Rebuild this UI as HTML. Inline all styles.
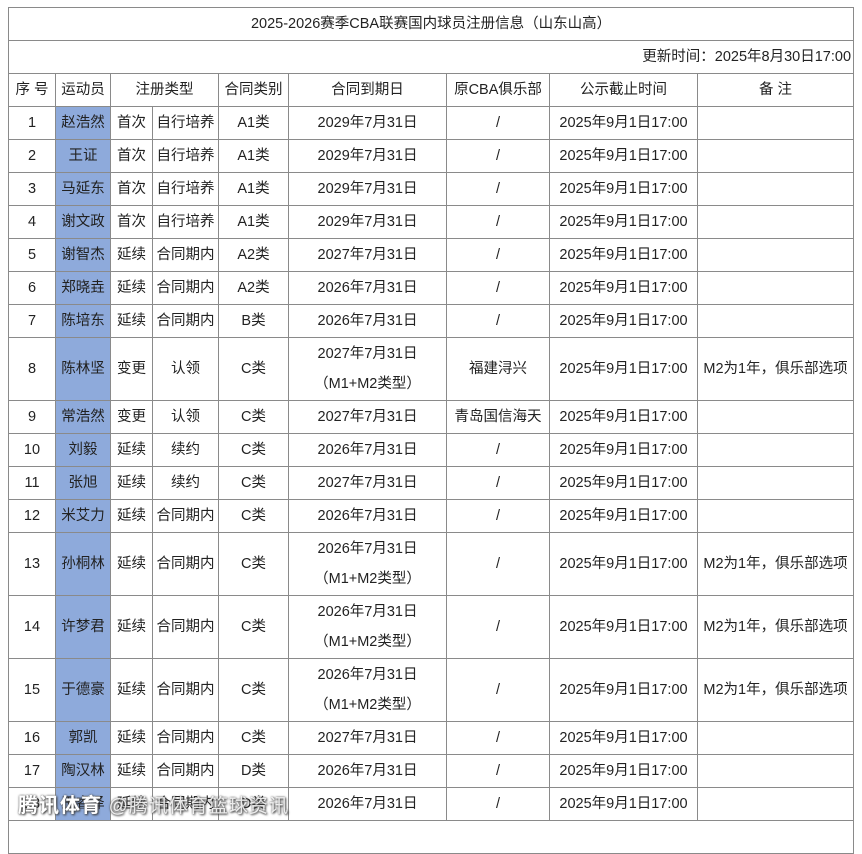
<!DOCTYPE html>
<html><head><meta charset="utf-8"><style>
body{margin:0;width:862px;height:828px;background:#fff;overflow:hidden;position:relative;font-family:"Liberation Sans","Noto Sans CJK SC",sans-serif;font-size:14.5px;color:#222}
table{position:absolute;left:8px;top:7px;border-collapse:collapse;table-layout:fixed;width:845px}
td{border:1px solid #8a8a8a;padding:0;text-align:center;vertical-align:middle;white-space:nowrap;overflow:hidden;line-height:30px}
tr{height:33px}
tr.t{height:63px}
td.b{background:#8eaadb}
.wm{position:absolute;left:18px;top:789px;font-size:20px;color:#fff;font-weight:bold;text-shadow:0 0 2px #555,1px 1px 2px #333;letter-spacing:1px;white-space:nowrap}
.wm span{font-weight:normal;font-size:19px;color:rgba(255,255,255,.85)}
</style></head><body>
<table>
<colgroup><col style="width:47px"><col style="width:55px"><col style="width:42px"><col style="width:66px"><col style="width:70px"><col style="width:158px"><col style="width:103px"><col style="width:148px"><col style="width:156px"></colgroup>
<tr><td colspan="9">2025-2026赛季CBA联赛国内球员注册信息（山东山高）</td></tr>
<tr><td colspan="9" style="text-align:right;padding-right:2px">更新时间：2025年8月30日17:00</td></tr>
<tr><td>序 号</td><td>运动员</td><td colspan="2">注册类型</td><td>合同类别</td><td>合同到期日</td><td>原CBA俱乐部</td><td>公示截止时间</td><td>备 注</td></tr>
<tr><td>1</td><td class="b">赵浩然</td><td>首次</td><td>自行培养</td><td>A1类</td><td>2029年7月31日</td><td>/</td><td>2025年9月1日17:00</td><td></td></tr>
<tr><td>2</td><td class="b">王证</td><td>首次</td><td>自行培养</td><td>A1类</td><td>2029年7月31日</td><td>/</td><td>2025年9月1日17:00</td><td></td></tr>
<tr><td>3</td><td class="b">马延东</td><td>首次</td><td>自行培养</td><td>A1类</td><td>2029年7月31日</td><td>/</td><td>2025年9月1日17:00</td><td></td></tr>
<tr><td>4</td><td class="b">谢文政</td><td>首次</td><td>自行培养</td><td>A1类</td><td>2029年7月31日</td><td>/</td><td>2025年9月1日17:00</td><td></td></tr>
<tr><td>5</td><td class="b">谢智杰</td><td>延续</td><td>合同期内</td><td>A2类</td><td>2027年7月31日</td><td>/</td><td>2025年9月1日17:00</td><td></td></tr>
<tr><td>6</td><td class="b">郑晓垚</td><td>延续</td><td>合同期内</td><td>A2类</td><td>2026年7月31日</td><td>/</td><td>2025年9月1日17:00</td><td></td></tr>
<tr><td>7</td><td class="b">陈培东</td><td>延续</td><td>合同期内</td><td>B类</td><td>2026年7月31日</td><td>/</td><td>2025年9月1日17:00</td><td></td></tr>
<tr class="t"><td>8</td><td class="b">陈林坚</td><td>变更</td><td>认领</td><td>C类</td><td>2027年7月31日<br>（M1+M2类型）</td><td>福建浔兴</td><td>2025年9月1日17:00</td><td>M2为1年，俱乐部选项</td></tr>
<tr><td>9</td><td class="b">常浩然</td><td>变更</td><td>认领</td><td>C类</td><td>2027年7月31日</td><td>青岛国信海天</td><td>2025年9月1日17:00</td><td></td></tr>
<tr><td>10</td><td class="b">刘毅</td><td>延续</td><td>续约</td><td>C类</td><td>2026年7月31日</td><td>/</td><td>2025年9月1日17:00</td><td></td></tr>
<tr><td>11</td><td class="b">张旭</td><td>延续</td><td>续约</td><td>C类</td><td>2027年7月31日</td><td>/</td><td>2025年9月1日17:00</td><td></td></tr>
<tr><td>12</td><td class="b">米艾力</td><td>延续</td><td>合同期内</td><td>C类</td><td>2026年7月31日</td><td>/</td><td>2025年9月1日17:00</td><td></td></tr>
<tr class="t"><td>13</td><td class="b">孙桐林</td><td>延续</td><td>合同期内</td><td>C类</td><td>2026年7月31日<br>（M1+M2类型）</td><td>/</td><td>2025年9月1日17:00</td><td>M2为1年，俱乐部选项</td></tr>
<tr class="t"><td>14</td><td class="b">许梦君</td><td>延续</td><td>合同期内</td><td>C类</td><td>2026年7月31日<br>（M1+M2类型）</td><td>/</td><td>2025年9月1日17:00</td><td>M2为1年，俱乐部选项</td></tr>
<tr class="t"><td>15</td><td class="b">于德豪</td><td>延续</td><td>合同期内</td><td>C类</td><td>2026年7月31日<br>（M1+M2类型）</td><td>/</td><td>2025年9月1日17:00</td><td>M2为1年，俱乐部选项</td></tr>
<tr><td>16</td><td class="b">郭凯</td><td>延续</td><td>合同期内</td><td>C类</td><td>2027年7月31日</td><td>/</td><td>2025年9月1日17:00</td><td></td></tr>
<tr><td>17</td><td class="b">陶汉林</td><td>延续</td><td>合同期内</td><td>D类</td><td>2026年7月31日</td><td>/</td><td>2025年9月1日17:00</td><td></td></tr>
<tr><td>18</td><td class="b">王睿泽</td><td>延续</td><td>合同期内</td><td>D类</td><td>2026年7月31日</td><td>/</td><td>2025年9月1日17:00</td><td></td></tr>
<tr><td colspan="9"></td></tr>
</table>
<div class="wm">腾讯体育 <span>@腾讯体育篮球资讯</span></div>
</body></html>
